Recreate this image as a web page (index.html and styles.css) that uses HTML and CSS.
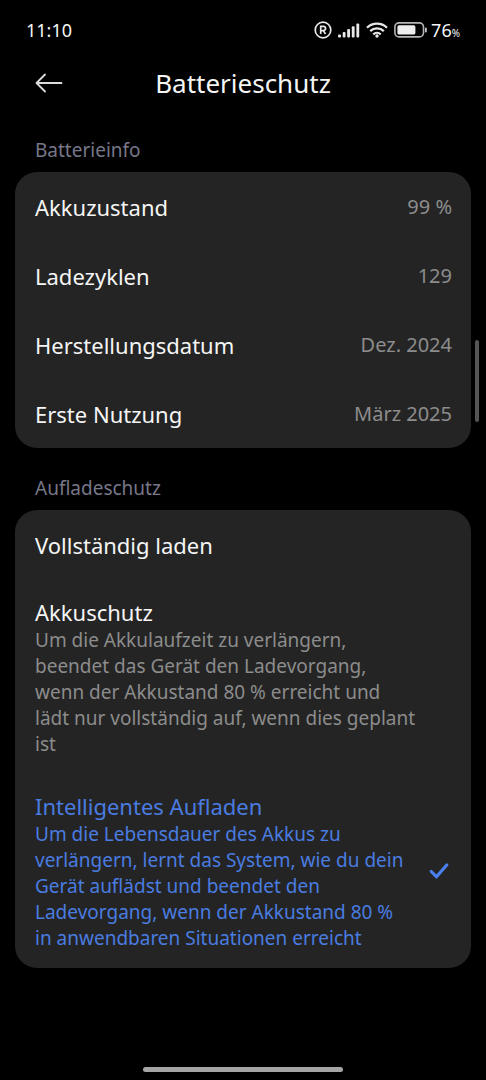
FILE: index.html
```html
<!DOCTYPE html>
<html lang="de">
<head>
  <meta charset="UTF-8">
  <meta name="viewport" content="width=device-width, initial-scale=1">
  <title>Batterieschutz</title>
  <link rel="stylesheet" href="styles.css">
</head>
<body>

  <!-- Statusleiste -->
  <div class="statusbar">
    <span class="time">11:10</span>
    <div class="status-icons">
      <svg width="18" height="18" viewBox="0 0 18 18" fill="none" stroke="#e8e8e8" stroke-width="1.7">
        <circle cx="9" cy="9" r="7.8"/>
        <path d="M6.7 13V5.3h2.7a2.1 2.1 0 0 1 0 4.3H6.7M9.3 9.6l2.2 3.4"/>
      </svg>
      <svg width="22" height="15" viewBox="0 0 22 15" fill="#e8e8e8">
        <rect x="0" y="11.5" width="3" height="3" rx="1"/>
        <rect x="4.7" y="9" width="2.8" height="5.5" rx="1"/>
        <rect x="9.2" y="6" width="2.8" height="8.5" rx="1"/>
        <rect x="13.8" y="3.3" width="2.8" height="11.2" rx="1"/>
        <rect x="18.4" y="0.5" width="2.8" height="14" rx="1"/>
      </svg>
      <svg width="22" height="16" viewBox="0 0 22 16" fill="none" stroke="#e8e8e8" stroke-width="2.3">
        <path d="M1 5.8a14.3 14.3 0 0 1 20 0M4.2 9.2a9.8 9.8 0 0 1 13.6 0M7.3 12.3a5.4 5.4 0 0 1 7.4 0"/>
        <circle cx="11" cy="14" r="1.7" fill="#e8e8e8" stroke="none"/>
      </svg>
      <div class="battery">
        <svg width="33" height="16" viewBox="0 0 33 16">
          <rect x="0.9" y="0.9" width="28.6" height="14" rx="4.2" fill="none" stroke="#b5b5b5" stroke-width="1.6"/>
          <rect x="3.4" y="3.3" width="18" height="9.2" rx="1.6" fill="#ededed"/>
          <rect x="31" y="5.5" width="1.8" height="5" rx="0.9" fill="#c8c8c8"/>
        </svg>
        <span class="percent">76<small>%</small></span>
      </div>
    </div>
  </div>

  <!-- Kopfzeile -->
  <header class="header">
    <button type="button" class="back" aria-label="Zurück">
      <svg width="28" height="20" viewBox="0 0 28 20" fill="none" stroke="#dcdcdc" stroke-width="1.8" stroke-linecap="round" stroke-linejoin="round">
        <path d="M26.5 10H1.5M10 1.5L1.5 10l8.5 8.5"/>
      </svg>
    </button>
    <h1>Batterieschutz</h1>
  </header>

  <main>
    <h2>Batterieinfo</h2>
    <dl class="card">
      <div class="row"><dt>Akkuzustand</dt><dd>99 %</dd></div>
      <div class="row"><dt>Ladezyklen</dt><dd>129</dd></div>
      <div class="row"><dt>Herstellungsdatum</dt><dd>Dez. 2024</dd></div>
      <div class="row"><dt>Erste Nutzung</dt><dd>März 2025</dd></div>
    </dl>

    <h2 id="schutz">Aufladeschutz</h2>
    <div class="card" role="radiogroup" aria-labelledby="schutz">
      <label class="option">
        <span class="option-text">
          <span class="option-title">Vollständig laden</span>
        </span>
        <input type="radio" name="modus" value="voll">
      </label>
      <label class="option">
        <span class="option-text">
          <span class="option-title">Akkuschutz</span>
          <span class="option-desc">Um die Akkulaufzeit zu verlängern, beendet das Gerät den Ladevorgang, wenn der Akkustand 80 % erreicht und lädt nur vollständig auf, wenn dies geplant ist</span>
        </span>
        <input type="radio" name="modus" value="schutz">
      </label>
      <label class="option">
        <span class="option-text">
          <span class="option-title">Intelligentes Aufladen</span>
          <span class="option-desc">Um die Lebensdauer des Akkus zu verlängern, lernt das System, wie du dein Gerät auflädst und beendet den Ladevorgang, wenn der Akkustand 80 % in&nbsp;anwendbaren Situationen erreicht</span>
        </span>
        <input type="radio" name="modus" value="smart" checked>
        <svg class="check" width="20" height="16" viewBox="0 0 20 16" fill="none" stroke="#4a80ee" stroke-width="3.2" stroke-linecap="round" stroke-linejoin="round">
          <path d="M2.3 8.5l5.2 5.3L17.7 2"/>
        </svg>
      </label>
    </div>
  </main>

  <div class="scroll-thumb"></div>
  <div class="home-bar"></div>

</body>
</html>
```

FILE: styles.css
```css
* {
  box-sizing: border-box;
}

body {
  margin: 0;
  min-height: 100vh;
  background: #000;
  color: #f5f5f5;
  font-family: "Noto Sans", sans-serif;
  display: flex;
  flex-direction: column;
  position: relative;
}

/* Statusleiste */
.statusbar {
  display: flex;
  justify-content: space-between;
  align-items: center;
  height: 60px;
  padding: 0 26px;
}

.time,
.percent {
  font-size: 18px;
}

.percent small {
  font-size: 10px;
}

.status-icons {
  display: flex;
  align-items: center;
  gap: 6px;
}

.battery {
  display: flex;
  align-items: center;
  gap: 4px;
}

/* Kopfzeile */
.header {
  display: grid;
  grid-template-columns: 48px 1fr 48px;
  align-items: center;
  height: 46px;
  padding: 0 27px;
}

.back {
  display: flex;
  padding: 8px;
  border: none;
  background: none;
  cursor: pointer;
}

h1 {
  margin: 0;
  font-size: 26px;
  font-weight: 400;
  text-align: center;
}

/* Inhalt */
main {
  flex: 1;
  padding: 24px 15px;
}

h2 {
  margin: 0;
  padding: 0 20px 2px;
  color: #777788;
  font-size: 19px;
  font-weight: 400;
  line-height: 40px;
}

.card {
  margin: 0 0 20px;
  border-radius: 22px;
  background: #242424;
}

.row {
  display: flex;
  justify-content: space-between;
  align-items: center;
  height: 69px;
  padding: 0 19px 0 20px;
}

dt,
.option-title {
  font-size: 22px;
  line-height: 30px;
}

dd {
  margin: 0;
  color: #8c8c8c;
  font-size: 20px;
}

.option {
  display: flex;
  justify-content: space-between;
  align-items: center;
  min-height: 70px;
  padding: 17px 22px 17px 20px;
  cursor: pointer;
}

.option-text {
  max-width: 384px;
}

.option-title,
.option-desc {
  display: block;
}

.option-desc {
  color: #8c8c8c;
  font-size: 19px;
  line-height: 26px;
}

.option input {
  appearance: none;
  width: 0;
  height: 0;
  margin: 0;
}

.option:has(input:checked) .option-title,
.option:has(input:checked) .option-desc {
  color: #4a7ce0;
}

.check {
  flex: none;
}

.scroll-thumb {
  position: absolute;
  top: 340px;
  right: 7px;
  width: 4px;
  height: 82px;
  border-radius: 2px;
  background: #555;
}

.home-bar {
  width: 200px;
  height: 5px;
  margin: 0 auto 8px;
  border-radius: 3px;
  background: #a5a5a5;
}
```
